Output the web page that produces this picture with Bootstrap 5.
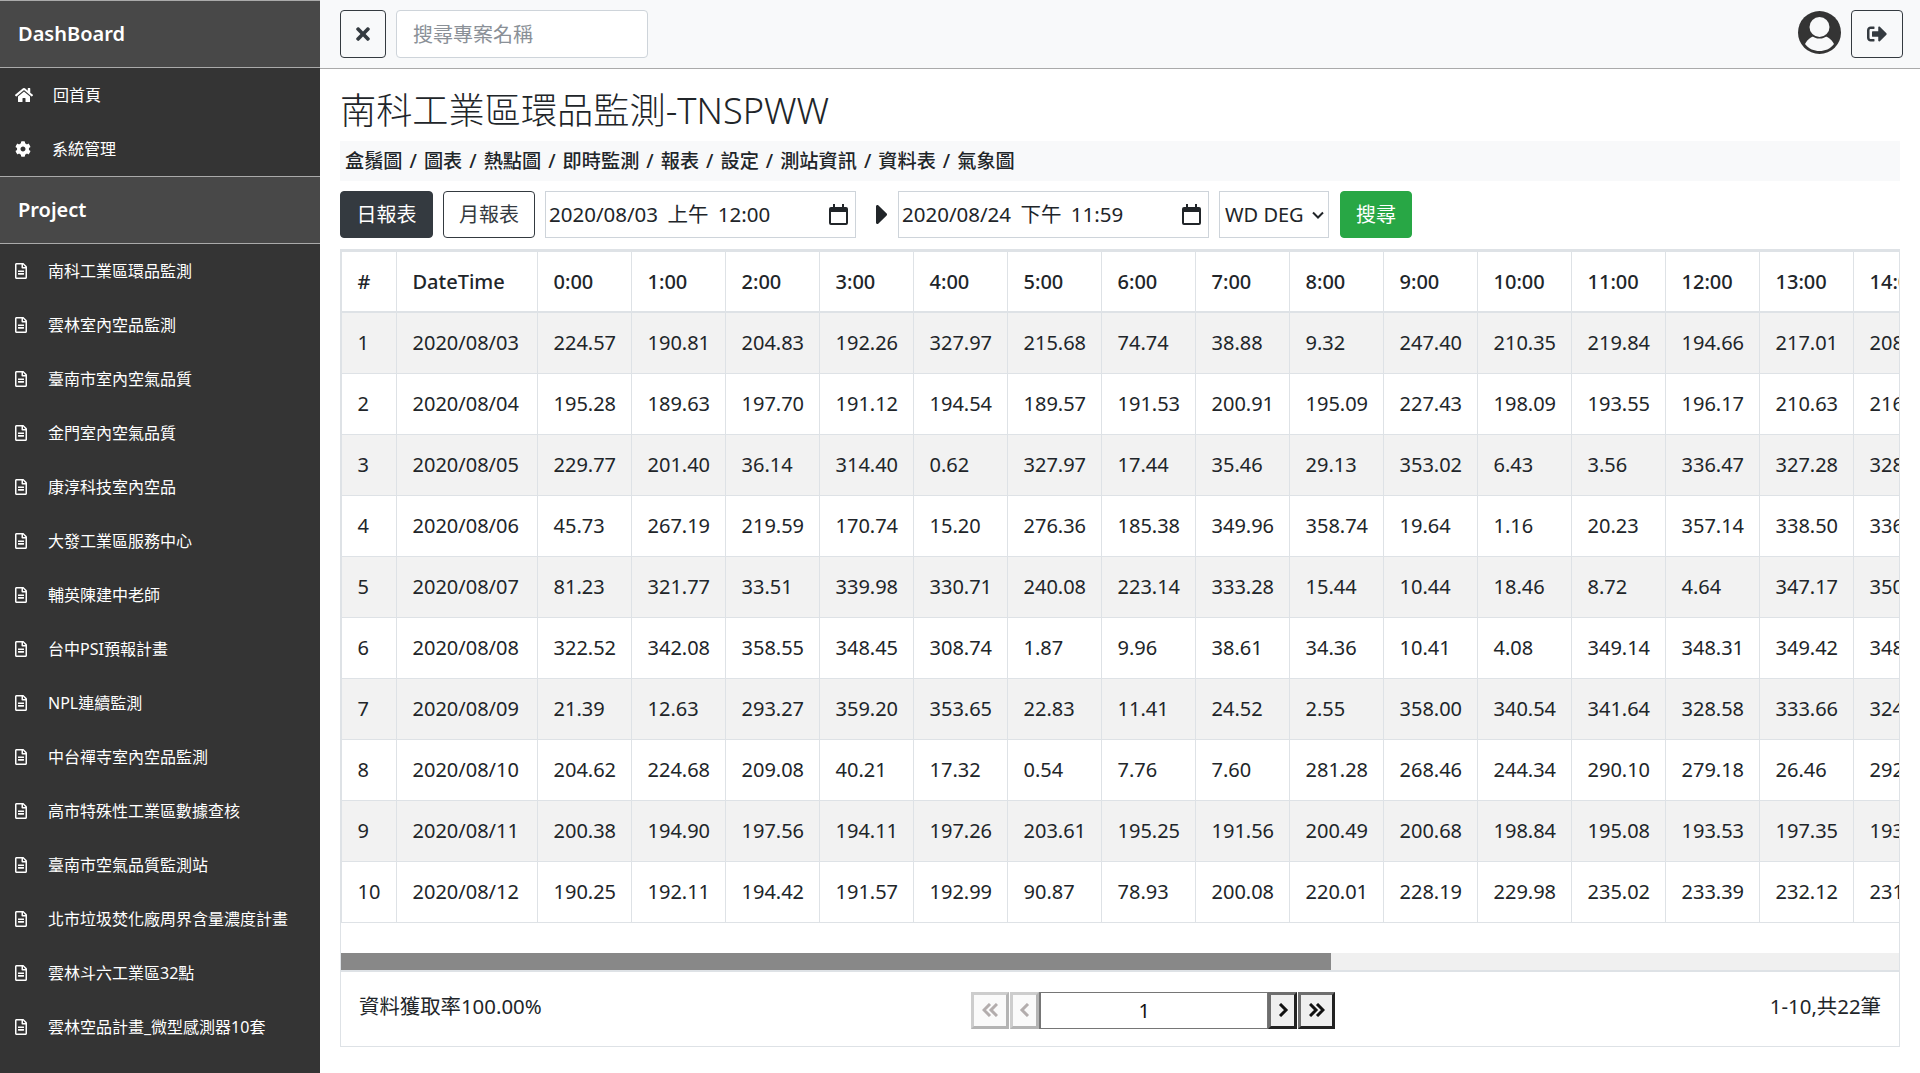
<!DOCTYPE html>
<html lang="zh-Hant">
<head>
<meta charset="utf-8">
<title>DashBoard</title>
<link href="https://cdn.jsdelivr.net/npm/bootstrap@5.3.0/dist/css/bootstrap.min.css" rel="stylesheet">
<style>
:root{--uifont:"Noto Sans","Noto Sans CJK TC",sans-serif;}
html,body{height:100%;overflow:hidden;}
body{font-family:var(--uifont);color:#212529;background:#fff;}
.shell{height:1073px;}
.side{width:320px;flex:0 0 320px;background:#343434;color:#fff;overflow:hidden;}
.side-head{height:66px;background:#484848;font-size:20px;font-weight:600;padding-left:18px;display:flex;align-items:center;border-bottom:1px solid #aaa;border-top:1px solid #aaa;box-sizing:content-box;}
.side-list{padding:0;margin:0;list-style:none;}
.side-item{height:54px;display:flex;align-items:center;padding-left:15px;font-size:16px;color:#fff;text-decoration:none;}
.side-ico{fill:#fff;height:16px;flex:none;}
.ic-file{width:12px;margin-right:21px;}
.ic-home{width:18px;margin-right:20px;}
.ic-cog{width:16px;margin-right:21px;}
.main{flex:1 1 auto;min-width:0;}
.topbar{height:69px;background:#f8f9fa;border-bottom:1px solid #aaa;padding:0 17px 0 20px;}
.tool-btn{height:48px;border:1px solid #343a40;border-radius:4px;background:transparent;display:flex;align-items:center;justify-content:center;padding:0;}
.tool-btn svg{fill:#343a40;}
.tb-close{width:46px;}
.tb-out{width:52px;}
.search-box{width:252px;height:48px;margin-left:10px;font-size:20px;color:#495057;padding:6px 16px;border-color:#ced4da;border-radius:4px;}
.search-box::placeholder{color:#8a9097;}
.avatar{width:43px;height:43px;margin-right:10px;margin-top:-3px;}
.content{padding:0 20px;}
.page-title{font-size:36.2px;font-weight:300;line-height:1.2;margin:0;padding:20px 0 0 0;height:72px;white-space:nowrap;}
.sub-nav{height:40px;background:#f8f9fa;font-size:19.2px;font-weight:500;word-spacing:2px;display:flex;align-items:center;padding-left:5px;white-space:nowrap;}
.tools{margin-top:10px;height:47px;}
.rpt-btn{height:47px;font-size:20px;padding:0;border-radius:4px;}
.rpt-day{width:93px;background:#343a40;border-color:#343a40;}
.rpt-month{width:92px;margin-left:10px;border-color:#343a40;color:#343a40;}
.date-box{height:47px;border:1px solid #ced4da;display:flex;align-items:center;justify-content:space-between;padding:0 7px 0 3px;font-size:20.5px;word-spacing:4px;background:#fff;color:#212529;white-space:nowrap;}
.date-a{width:311px;margin-left:10px;}
.date-b{width:311px;}
.cal{width:19px;height:21px;flex:none;}
.arrow{width:42px;height:47px;padding-right:11px;display:flex;align-items:center;justify-content:flex-end;}
.arrow svg{width:11px;height:19px;fill:#212529;}
.wd-select{width:110px;height:47px;margin-left:10px;border-radius:0;font-size:20px;padding:0 22px 0 5px;color:#212529;background-image:url("data:image/svg+xml,%3csvg xmlns='http://www.w3.org/2000/svg' viewBox='0 0 12 8'%3e%3cpath fill='none' stroke='%23212529' stroke-width='2' d='M1 1.500l5 5 5-5'/%3e%3c/svg%3e");background-position:right 4px center;background-size:12px 8px;border-color:#ced4da;}
.go-btn{width:72px;height:47px;margin-left:11px;background:#28a745;border-color:#28a745;font-size:20px;padding:0;border-radius:4px;}
.data-card{margin-top:11px;border-radius:0;border-color:#dee2e6;border-width:1px;width:1560px;height:798px;}
.table-scroll{height:703px;overflow:hidden;}
.fake-bar{height:17px;background:#f0f0f0;flex:none;}
.fake-thumb{height:17px;background:#888;}
.grid-table{table-layout:fixed;width:2452px;margin:0;font-size:20px;border-color:#dee2e6;}
.grid-table th,.grid-table td{height:61px;padding:0 15.500px;vertical-align:middle;white-space:nowrap;border-width:1px;}
.grid-table th{font-weight:500;height:61px;font-size:20px;}
.grid-table thead th{border-bottom-width:2px;border-bottom-color:#dee2e6;}
.grid-table{--bs-table-striped-bg:#f2f2f2;--bs-table-color:#212529;--bs-table-striped-color:#212529;border-top:2px solid #dee2e6;}
.c-no{width:55px;}
.c-date{width:141px;}
.c-h{width:94px;}
.foot{padding:0 18px;font-size:20.4px;border-top:2px solid #dee2e6;box-sizing:content-box;height:72px;}
.foot-rate{margin-top:-4px;}
.foot-count{margin-top:-4px;}
.pager{display:flex;height:37px;margin-top:4px;margin-right:5px;}
.pg{background:#efefef;border:3px solid;padding:0;display:flex;align-items:center;justify-content:center;height:37px;}
.pg svg{width:16px;height:14px;stroke:#111;stroke-width:3;fill:none;}
.pg-off{background:#fafafa;border-color:#cdcdcd #b4b4b4 #b4b4b4 #cdcdcd;}
.pg-off svg{stroke:#b3adad;}
.pg-on{border-color:#6e6e6e #222 #222 #6e6e6e;}
.w-dbl{width:38px;}
.w-dbl.pg-on{width:37px;}
.w-sgl{width:29px;margin-left:1px;}
.w-sgl.pg-on{margin-left:0;margin-right:1px;}
.pg-input{width:229px;height:37px;border:1px solid #767676;border-left-width:2px;font-size:20px;text-align:center;padding:0 20px 0 0;background:#fff;color:#111;}
</style>
</head>
<body>
<div class="shell d-flex">
  <aside class="side">
    <div class="side-head">DashBoard</div>
    <ul class="side-list">
      <li><a class="side-item" href="#"><svg class="side-ico ic-home" viewBox="0 0 576 512"><path d="M280.37 148.26L96 300.11V464a16 16 0 0 0 16 16l112.06-.29a16 16 0 0 0 15.92-16V368a16 16 0 0 1 16-16h64a16 16 0 0 1 16 16v95.64a16 16 0 0 0 16 16.05L464 480a16 16 0 0 0 16-16V300L295.67 148.26a12.19 12.19 0 0 0-15.3 0zM571.6 251.47L488 182.56V44.05a12 12 0 0 0-12-12h-56a12 12 0 0 0-12 12v72.61L318.47 43a48 48 0 0 0-61 0L4.34 251.47a12 12 0 0 0-1.6 16.9l25.5 31A12 12 0 0 0 45.15 301l235.22-193.74a12.19 12.19 0 0 1 15.3 0L530.9 301a12 12 0 0 0 16.9-1.6l25.5-31a12 12 0 0 0-1.7-16.93z"/></svg>回首頁</a></li>
      <li><a class="side-item" href="#"><svg class="side-ico ic-cog" viewBox="0 0 512 512"><path d="M487.4 315.7l-42.6-24.6c4.3-23.2 4.3-47 0-70.2l42.6-24.6c4.9-2.8 7.1-8.6 5.5-14-11.1-35.6-30-67.8-54.7-94.6-3.8-4.1-10-5.1-14.8-2.3L380.8 110c-17.9-15.4-38.5-27.3-60.8-35.1V25.8c0-5.6-3.9-10.5-9.4-11.7-36.7-8.2-74.3-7.8-109.2 0-5.5 1.2-9.4 6.1-9.4 11.7V75c-22.2 7.9-42.8 19.8-60.8 35.1L88.7 85.5c-4.9-2.8-11-1.9-14.8 2.3-24.7 26.7-43.6 58.9-54.7 94.6-1.7 5.4.6 11.2 5.5 14L67.3 221c-4.3 23.2-4.3 47 0 70.2l-42.6 24.6c-4.9 2.8-7.1 8.6-5.5 14 11.1 35.6 30 67.8 54.7 94.6 3.8 4.1 10 5.1 14.8 2.3l42.6-24.6c17.9 15.4 38.5 27.3 60.8 35.1v49.2c0 5.6 3.9 10.5 9.4 11.7 36.7 8.2 74.3 7.8 109.2 0 5.5-1.2 9.4-6.1 9.4-11.7v-49.2c22.2-7.9 42.8-19.8 60.8-35.1l42.6 24.6c4.9 2.8 11 1.9 14.8-2.3 24.7-26.7 43.6-58.9 54.7-94.6 1.5-5.5-.7-11.3-5.6-14.1zM256 336c-44.1 0-80-35.9-80-80s35.9-80 80-80 80 35.9 80 80-35.9 80-80 80z"/></svg>系統管理</a></li>
    </ul>
    <div class="side-head">Project</div>
    <ul class="side-list" id="projects"></ul>
  </aside>
  <main class="main">
    <div class="topbar d-flex align-items-center">
      <button class="tool-btn tb-close" type="button"><svg width="14" height="20" viewBox="0 0 352 512"><path d="M242.72 256l100.07-100.07c12.28-12.28 12.28-32.19 0-44.48l-22.24-22.24c-12.28-12.28-32.19-12.28-44.48 0L176 189.28 75.93 89.21c-12.28-12.28-32.19-12.28-44.48 0L9.21 111.45c-12.28 12.28-12.28 32.19 0 44.48L109.28 256 9.21 356.07c-12.28 12.28-12.28 32.19 0 44.48l22.24 22.24c12.28 12.28 32.2 12.28 44.48 0L176 322.72l100.07 100.07c12.28 12.28 32.2 12.28 44.48 0l22.24-22.24c12.28-12.28 12.28-32.19 0-44.48L242.72 256z"/></svg></button>
      <input class="form-control search-box" type="text" placeholder="搜尋專案名稱">
      <div class="ms-auto d-flex align-items-center">
        <svg class="avatar" viewBox="0 0 43 43"><circle cx="21.500" cy="21.500" r="21.500" fill="#343434"/><path fill="#f8f9fa" d="M7 33C10 27 15 24.500 21.500 24.500S33 27 36 33C32 38 27 40 21.500 40S11 38 7 33Z"/><circle cx="21.500" cy="16" r="11.500" fill="#343434"/><circle cx="21.500" cy="16" r="10" fill="#f8f9fa"/></svg>
        <button class="tool-btn tb-out" type="button"><svg width="20" height="20" viewBox="0 0 512 512"><path d="M497 273L329 441c-15 15-41 4.5-41-17v-96H152c-13.3 0-24-10.7-24-24v-96c0-13.3 10.7-24 24-24h136V88c0-21.4 25.9-32 41-17l168 168c9.3 9.4 9.3 24.6 0 34zM192 436v-40c0-6.6-5.4-12-12-12H96c-17.7 0-32-14.3-32-32V160c0-17.7 14.3-32 32-32h84c6.6 0 12-5.4 12-12V76c0-6.6-5.4-12-12-12H96c-53 0-96 43-96 96v192c0 53 43 96 96 96h84c6.6 0 12-5.4 12-12z"/></svg></button>
      </div>
    </div>
    <div class="content">
      <h2 class="page-title">南科工業區環品監測-TNSPWW</h2>
      <div class="sub-nav">盒鬚圖 / 圖表 / 熱點圖 / 即時監測 / 報表 / 設定 / 測站資訊 / 資料表 / 氣象圖</div>
      <div class="tools d-flex align-items-center">
        <button class="btn btn-dark rpt-btn rpt-day" type="button">日報表</button>
        <button class="btn btn-outline-dark rpt-btn rpt-month" type="button">月報表</button>
        <div class="date-box date-a"><span>2020/08/03 上午 12:00</span><svg class="cal" viewBox="0 0 19 21"><path fill="#212529" d="M4 0h2v3h7V0h2v3h2a2 2 0 0 1 2 2v14a2 2 0 0 1-2 2H2a2 2 0 0 1-2-2V5a2 2 0 0 1 2-2h2zM2 8v11h15V8z"/></svg></div>
        <div class="arrow"><svg viewBox="0 108 168 296" preserveAspectRatio="none"><path d="M0 384.662V127.338c0-17.818 21.543-26.741 34.142-14.142l128.662 128.662c7.810 7.810 7.810 20.474 0 28.284L34.142 398.804C21.543 411.404 0 402.480 0 384.662z"/></svg></div>
        <div class="date-box date-b"><span>2020/08/24 下午 11:59</span><svg class="cal" viewBox="0 0 19 21"><path fill="#212529" d="M4 0h2v3h7V0h2v3h2a2 2 0 0 1 2 2v14a2 2 0 0 1-2 2H2a2 2 0 0 1-2-2V5a2 2 0 0 1 2-2h2zM2 8v11h15V8z"/></svg></div>
        <select class="form-select wd-select"><option>WD DEG</option></select>
        <button class="btn btn-success go-btn" type="button">搜尋</button>
      </div>
      <div class="card data-card">
        <div class="table-scroll">
          <table class="table table-bordered table-striped grid-table">
            <colgroup id="cols"></colgroup>
            <thead><tr id="head"></tr></thead>
            <tbody id="body"></tbody>
          </table>
        </div>
        <div class="fake-bar"><div class="fake-thumb" style="width:990px"></div></div>
        <div class="foot d-flex align-items-center justify-content-between">
          <div class="foot-rate">資料獲取率100.00%</div>
          <div class="pager">
            <button class="pg pg-off w-dbl" type="button" disabled><svg viewBox="0 0 16 14"><path d="M8 1 2 7l6 6M15 1 9 7l6 6"/></svg></button>
            <button class="pg pg-off w-sgl" type="button" disabled><svg viewBox="0 0 16 14"><path d="M11 1 5 7l6 6"/></svg></button>
            <input class="pg-input" type="text" value="1">
            <button class="pg pg-on w-sgl" type="button"><svg viewBox="0 0 16 14"><path d="M5 1l6 6-6 6"/></svg></button>
            <button class="pg pg-on w-dbl" type="button"><svg viewBox="0 0 16 14"><path d="M1 1l6 6-6 6M8 1l6 6-6 6"/></svg></button>
          </div>
          <div class="foot-count">1-10,共22筆</div>
        </div>
      </div>
    </div>
  </main>
</div>
<script>
var P=["南科工業區環品監測","雲林室內空品監測","臺南市室內空氣品質","金門室內空氣品質","康淳科技室內空品","大發工業區服務中心","輔英陳建中老師","台中PSI預報計畫","NPL連續監測","中台禪寺室內空品監測","高市特殊性工業區數據查核","臺南市空氣品質監測站","北市垃圾焚化廠周界含量濃度計畫","雲林斗六工業區32點","雲林空品計畫_微型感測器10套"];
var fileIcon='<svg class="side-ico ic-file" viewBox="0 0 384 512"><path d="M288 248v28c0 6.600-5.400 12-12 12H108c-6.600 0-12-5.400-12-12v-28c0-6.600 5.400-12 12-12h168c6.600 0 12 5.400 12 12zm-12 72H108c-6.600 0-12 5.400-12 12v28c0 6.600 5.400 12 12 12h168c6.600 0 12-5.400 12-12v-28c0-6.600-5.400-12-12-12zm108-188.100V464c0 26.500-21.500 48-48 48H48c-26.500 0-48-21.500-48-48V48C0 21.500 21.500 0 48 0h204.100C264.800 0 277 5.100 286 14.100L369.900 98c9 8.900 14.100 21.200 14.100 33.900zm-128-80V128h76.100L256 51.900zM336 464V176H232c-13.300 0-24-10.700-24-24V48H48v416h288z"/></svg>';
document.getElementById('projects').innerHTML=P.map(function(t){return '<li><a class="side-item" href="#">'+fileIcon+t+'</a></li>';}).join('');
var R=[
["224.57","190.81","204.83","192.26","327.97","215.68","74.74","38.88","9.32","247.40","210.35","219.84","194.66","217.01","208.15"],
["195.28","189.63","197.70","191.12","194.54","189.57","191.53","200.91","195.09","227.43","198.09","193.55","196.17","210.63","216.40"],
["229.77","201.40","36.14","314.40","0.62","327.97","17.44","35.46","29.13","353.02","6.43","3.56","336.47","327.28","328.10"],
["45.73","267.19","219.59","170.74","15.20","276.36","185.38","349.96","358.74","19.64","1.16","20.23","357.14","338.50","336.22"],
["81.23","321.77","33.51","339.98","330.71","240.08","223.14","333.28","15.44","10.44","18.46","8.72","4.64","347.17","350.31"],
["322.52","342.08","358.55","348.45","308.74","1.87","9.96","38.61","34.36","10.41","4.08","349.14","348.31","349.42","348.70"],
["21.39","12.63","293.27","359.20","353.65","22.83","11.41","24.52","2.55","358.00","340.54","341.64","328.58","333.66","324.19"],
["204.62","224.68","209.08","40.21","17.32","0.54","7.76","7.60","281.28","268.46","244.34","290.10","279.18","26.46","292.05"],
["200.38","194.90","197.56","194.11","197.26","203.61","195.25","191.56","200.49","200.68","198.84","195.08","193.53","197.35","193.27"],
["190.25","192.11","194.42","191.57","192.99","90.87","78.93","200.08","220.01","228.19","229.98","235.02","233.39","232.12","231.44"]];
var cols='<col class="c-no"><col class="c-date">',head='<th>#</th><th>DateTime</th>';
for(var h=0;h<24;h++){cols+='<col class="c-h">';head+='<th>'+h+':00</th>';}
document.getElementById('cols').innerHTML=cols;
document.getElementById('head').innerHTML=head;
document.getElementById('body').innerHTML=R.map(function(r,i){
  var d='2020/08/'+String(i+3).padStart(2,'0');
  var cells='<td>'+(i+1)+'</td><td>'+d+'</td>'+r.map(function(v){return '<td>'+v+'</td>';}).join('');
  for(var k=r.length;k<24;k++)cells+='<td></td>';
  return '<tr>'+cells+'</tr>';
}).join('');
</script>
<script src="https://cdn.jsdelivr.net/npm/bootstrap@5.3.0/dist/js/bootstrap.bundle.min.js"></script>
</body>
</html>
